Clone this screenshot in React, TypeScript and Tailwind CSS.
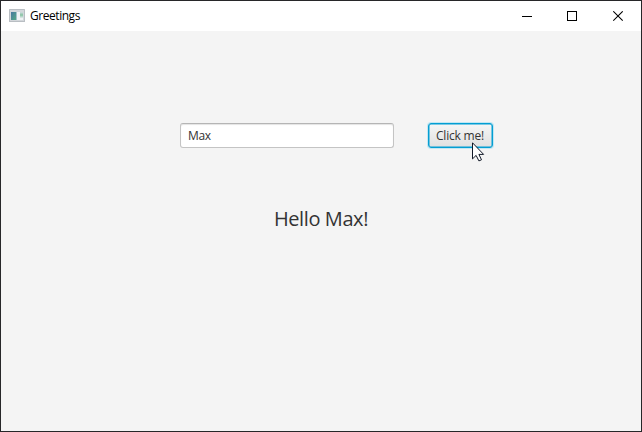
function AppIcon() {
  return (
    <svg className="-mt-px" width="16" height="13" viewBox="0 0 16 13">
      <defs>
        <linearGradient id="pane" x1="0" y1="0" x2="1" y2="1">
          <stop offset="0" stopColor="#4777a0" />
          <stop offset="1" stopColor="#55a986" />
        </linearGradient>
        <linearGradient id="side" x1="0" y1="0" x2="0" y2="1">
          <stop offset="0" stopColor="#d5dce2" />
          <stop offset="0.5" stopColor="#86c3a2" />
          <stop offset="1" stopColor="#e4e9ec" />
        </linearGradient>
      </defs>
      <rect width="16" height="13" rx="0.5" fill="#b9bec3" />
      <rect x="1" y="1" width="14" height="11" fill="#d3d7db" />
      <rect x="2" y="3" width="12" height="8" fill="#f0f3f5" />
      <rect x="2" y="3" width="5" height="8" fill="url(#pane)" />
      <rect x="7" y="3" width="1" height="8" fill="#a3c1c9" />
      <rect x="11" y="3" width="3" height="6" fill="url(#side)" />
    </svg>
  );
}

function TitleBar() {
  return (
    <header className="flex h-[30px] items-center bg-white pl-2">
      <AppIcon />
      <span className="ml-[5px] w-[60px] whitespace-nowrap font-['Open_Sans','Noto_Sans',sans-serif] text-[12px] leading-[16px] tracking-[-0.45px] text-black">
        Greetings
      </span>
      <div className="ml-auto flex h-full" aria-label="Window controls">
        <button className="flex w-[45px] items-center justify-center" aria-label="Minimize">
          <svg width="11" height="11" shapeRendering="crispEdges">
            <path d="M0 5.5h10" stroke="#000" />
          </svg>
        </button>
        <button className="flex w-[45px] items-center justify-center" aria-label="Maximize">
          <svg width="11" height="11" shapeRendering="crispEdges">
            <path d="M.5.5h9v9h-9z" fill="none" stroke="#000" />
          </svg>
        </button>
        <button className="flex w-[46px] items-center justify-center" aria-label="Close">
          <svg width="11" height="11">
            <path d="M.3.3l9.4 9.4M9.7.3L.3 9.7" stroke="#000" strokeWidth="1.05" />
          </svg>
        </button>
      </div>
    </header>
  );
}

export default function App() {
  return (
    <div className="flex h-[432px] w-[642px] flex-col overflow-hidden border border-[#272729] bg-[#f4f4f4] font-['Open_Sans','Noto_Sans',sans-serif] text-[#333]">
      <TitleBar />
      <main className="flex flex-1 flex-col">
        <div className="mt-[92px] flex pl-[179px]">
          <input
            className="h-[25px] w-[214px] rounded-[3px] border border-[#c4c4c4] border-t-[#b5b5b5] bg-white px-[7px] pb-px text-[12px] tracking-[-0.3px] text-[#333] shadow-[inset_0_1px_1px_#e4e4e4] outline-none"
            defaultValue="Max"
          />
          <div className="relative ml-[34px]">
            <button className="flex h-[25px] w-[65px] items-center justify-center whitespace-nowrap rounded-[3px] border border-[#039ed3] bg-gradient-to-b from-[#f6f6f6] to-[#e0e0e0] pr-px pt-px text-[12px] tracking-[-0.2px] shadow-[0_0_0_1px_#c2e7f3,inset_0_0_0_0.5px_#039ed3]">
              Click me!
            </button>
            <svg className="absolute left-[44px] top-[19px]" width="13" height="20" viewBox="0 0 13 20">
              <path
                d="M.5.8v16.1l3.6-3.5 2.8 5.5 2.6-1.1-2.6-5.4h4.7z"
                fill="#fff"
                stroke="#111827"
                strokeWidth="1"
              />
            </svg>
          </div>
        </div>
        <p className="mt-[56px] text-center text-[20px] leading-[30px] tracking-[-0.4px]">Hello Max!</p>
      </main>
    </div>
  );
}
